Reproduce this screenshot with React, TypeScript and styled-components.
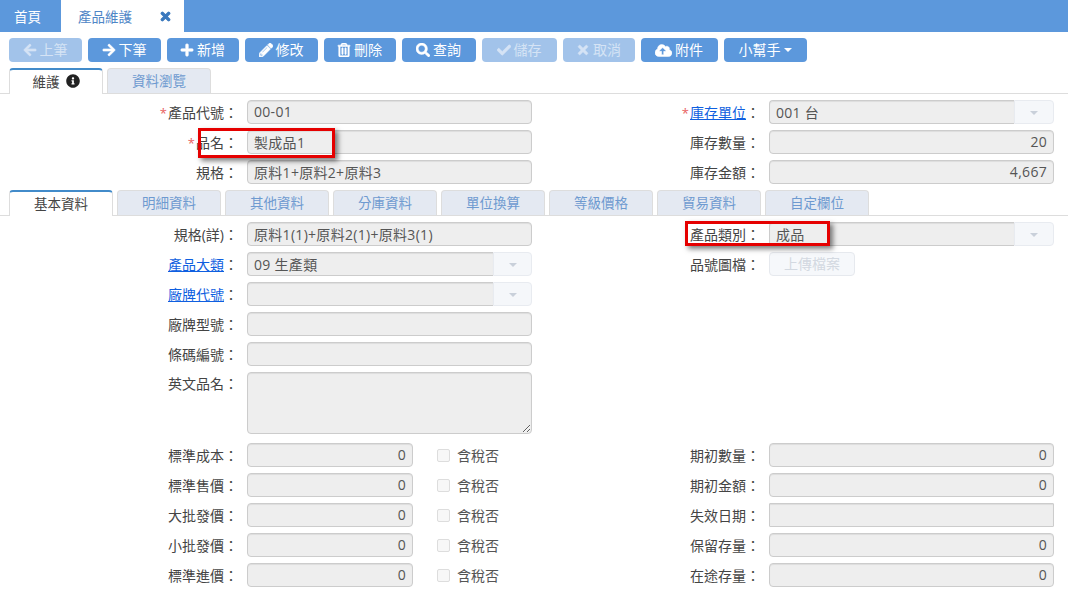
import React from 'react';
import styled, { createGlobalStyle } from 'styled-components';
import {
  FaArrowLeft,
  FaArrowRight,
  FaPlus,
  FaPencilAlt,
  FaRegTrashAlt,
  FaSearch,
  FaCheck,
  FaTimes,
  FaCloudUploadAlt,
  FaInfoCircle,
} from 'react-icons/fa';

const GlobalStyle = createGlobalStyle`
  html, body {
    margin: 0;
    padding: 0;
    background: #fff;
    overflow: hidden;
  }
  body {
    font-family: "Open Sans", "Noto Sans CJK TC", sans-serif;
    font-size: 14px;
    color: #444;
  }
`;

const Page = styled.div`
  position: relative;
  width: 1068px;
  height: 593px;
  overflow: hidden;
`;

const TopBar = styled.div`
  display: flex;
  height: 32px;
  background: #5c98dc;
`;

const TopTab = styled.div<{ $active?: boolean }>`
  display: flex;
  align-items: center;
  padding-left: ${(p) => (p.$active ? '17px' : '14px')};
  width: ${(p) => (p.$active ? '123px' : '61px')};
  box-sizing: border-box;
  background: ${(p) => (p.$active ? '#fff' : 'transparent')};
  color: ${(p) => (p.$active ? '#4f86c6' : '#fff')};
  font-size: 13.5px;
`;

const CloseIcon = styled(FaTimes)`
  margin-left: 27px;
  font-size: 13px;
  color: #3a78bd;
  stroke: currentColor;
  stroke-width: 40;
`;

const Toolbar = styled.div`
  display: flex;
  gap: 6px;
  padding: 6px 9px;
`;

const ToolButton = styled.button<{ $width: number; $off?: boolean }>`
  display: flex;
  align-items: center;
  justify-content: center;
  gap: 3px;
  width: ${(p) => p.$width}px;
  height: 24px;
  padding: 0 1px 2px 0;
  border: 0;
  border-radius: 4px;
  background: ${(p) => (p.$off ? '#a2c3ea' : '#5c98dc')};
  color: ${(p) => (p.$off ? '#d5e3f5' : '#fff')};
  font: inherit;
  svg {
    font-size: 14px;
    margin-top: 2px;
    stroke: currentColor;
    stroke-width: 20;
  }
`;

const CloudIcon = styled(FaCloudUploadAlt)`
  && {
    font-size: 17px;
  }
`;

const Caret = styled.span<{ $color?: string }>`
  display: inline-block;
  width: 0;
  height: 0;
  margin-top: 2px;
  border-left: 4px solid transparent;
  border-right: 4px solid transparent;
  border-top: 4px solid ${(p) => p.$color ?? '#fff'};
`;

const TabStrip = styled.div`
  display: flex;
  gap: 4px;
  box-sizing: border-box;
  padding-left: 9px;
  height: 26px;
  border-bottom: 1px solid #ddd;
`;

const Tab = styled.div<{ $active?: boolean; $width: number }>`
  display: flex;
  align-items: center;
  justify-content: center;
  gap: 6px;
  box-sizing: border-box;
  width: ${(p) => p.$width}px;
  height: ${(p) => (p.$active ? '26px' : '25px')};
  padding-bottom: 3px;
  border: 1px solid #ddd;
  border-top: ${(p) => (p.$active ? '2px solid #428bca' : '1px solid #ddd')};
  border-bottom: 0;
  border-radius: 4px 4px 0 0;
  background: ${(p) => (p.$active ? '#fff' : '#e4e9f2')};
  color: ${(p) => (p.$active ? '#444' : '#6e9ad0')};
  font-size: 13.5px;
  svg {
    font-size: 14px;
    color: #222;
  }
`;

const Section = styled.div`
  display: flex;
  flex-direction: column;
  gap: 6px;
  padding: 6px 0;
`;

const Row = styled.div`
  display: flex;
  align-items: flex-start;
`;

const Field = styled.div`
  display: flex;
  align-items: center;
  height: 24px;
`;

const LeftField = styled(Field)`
  width: 532px;
`;

const Label = styled.label<{ $width: number }>`
  width: ${(p) => p.$width}px;
  margin-right: 9px;
  padding-bottom: 1px;
  text-align: right;
  white-space: nowrap;
  color: #444;
`;

const Star = styled.span`
  margin-right: 1px;
  font-size: 13px;
  color: #e8605f;
`;

const LabelLink = styled.a`
  color: #0f5fe0;
  text-decoration: underline;
`;

const inputLook = `
  box-sizing: border-box;
  height: 24px;
  padding: 0 6px 1px;
  border: 1px solid #ccc;
  border-radius: 4px;
  background: #eee;
  color: #555;
  font: inherit;
  letter-spacing: 0.3px;
  outline: none;
  box-shadow: inset 0 1px 1px rgba(0, 0, 0, 0.075);
`;

const Input = styled.input<{ $width?: number; $right?: boolean }>`
  ${inputLook}
  width: ${(p) => p.$width ?? 285}px;
  text-align: ${(p) => (p.$right ? 'right' : 'left')};
`;

const DateInput = styled(Input)`
  border-radius: 1px;
`;

const TextArea = styled.textarea`
  ${inputLook}
  display: block;
  width: 285px;
  height: 62px;
  resize: both;
`;

const TextAreaField = styled.div`
  display: flex;
  align-items: flex-start;
  margin-bottom: 3px;
  line-height: 24px;
`;

const SelectBox = styled.div<{ $width: number }>`
  display: flex;
  width: 285px;
  ${Input} {
    width: ${(p) => p.$width}px;
    border-radius: 4px 0 0 4px;
    border-right: 0;
  }
`;

const SelectButton = styled.div`
  flex: 1;
  display: flex;
  align-items: center;
  justify-content: center;
  height: 24px;
  box-sizing: border-box;
  border: 1px solid #e8ebf0;
  border-radius: 0 4px 4px 0;
  background: #f5f7fa;
`;

const UploadButton = styled.button`
  box-sizing: border-box;
  width: 86px;
  height: 24px;
  padding: 0 0 2px;
  border: 1px solid #e6e9ee;
  border-radius: 4px;
  background: #f6f8fb;
  color: #d3d9e1;
  font: inherit;
`;

const CheckLabel = styled.span`
  display: flex;
  align-items: center;
  gap: 7px;
  margin-left: 24px;
  padding-bottom: 1px;
  color: #555;
`;

const CheckBox = styled.input`
  appearance: none;
  box-sizing: border-box;
  width: 13px;
  height: 13px;
  margin: 2px 0 0;
  border: 1px solid #ddd;
  border-radius: 2px;
  background: #f7f7f7;
`;

// the red rectangles are annotations drawn on top of the screenshot
const Marker = styled.div<{ $x: number; $y: number; $w: number; $h: number }>`
  position: absolute;
  left: ${(p) => p.$x}px;
  top: ${(p) => p.$y}px;
  width: ${(p) => p.$w}px;
  height: ${(p) => p.$h}px;
  box-sizing: border-box;
  border: 3px solid #e50000;
  box-shadow: 3px 3px 5px rgba(0, 0, 0, 0.5);
  pointer-events: none;
`;

const LEFT_LABEL = 238;
const RIGHT_LABEL = 228;

function TextField({ value, right }: { value: string; right?: boolean }) {
  return <Input readOnly value={value} $right={right} />;
}

function Select({ value, inner }: { value: string; inner: number }) {
  return (
    <SelectBox $width={inner}>
      <Input readOnly value={value} />
      <SelectButton>
        <Caret $color="#c9d0da" />
      </SelectButton>
    </SelectBox>
  );
}

function PriceRow({
  name,
  rightName,
  rightValue,
  date,
}: {
  name: string;
  rightName: string;
  rightValue?: string;
  date?: boolean;
}) {
  return (
    <Row>
      <LeftField>
        <Label $width={LEFT_LABEL}>{name}：</Label>
        <Input readOnly value="0" $width={166} $right />
        <CheckLabel>
          <CheckBox type="checkbox" disabled />
          含稅否
        </CheckLabel>
      </LeftField>
      <Field>
        <Label $width={RIGHT_LABEL}>{rightName}：</Label>
        {date ? <DateInput readOnly value="" /> : <TextField value={rightValue ?? ''} right />}
      </Field>
    </Row>
  );
}

const detailTabs = ['明細資料', '其他資料', '分庫資料', '單位換算', '等級價格', '貿易資料', '自定欄位'];

export default function App() {
  return (
    <Page>
      <GlobalStyle />
      <TopBar>
        <TopTab>首頁</TopTab>
        <TopTab $active>
          產品維護
          <CloseIcon />
        </TopTab>
      </TopBar>

      <Toolbar>
        <ToolButton $width={73} $off><FaArrowLeft />上筆</ToolButton>
        <ToolButton $width={73}><FaArrowRight />下筆</ToolButton>
        <ToolButton $width={72}><FaPlus />新增</ToolButton>
        <ToolButton $width={73}><FaPencilAlt />修改</ToolButton>
        <ToolButton $width={72}><FaRegTrashAlt />刪除</ToolButton>
        <ToolButton $width={74}><FaSearch />查詢</ToolButton>
        <ToolButton $width={75} $off><FaCheck />儲存</ToolButton>
        <ToolButton $width={72} $off><FaTimes />取消</ToolButton>
        <ToolButton $width={77}><CloudIcon />附件</ToolButton>
        <ToolButton $width={83}>小幫手<Caret /></ToolButton>
      </Toolbar>

      <TabStrip>
        <Tab $active $width={94}>維護<FaInfoCircle /></Tab>
        <Tab $width={104}>資料瀏覽</Tab>
      </TabStrip>

      <Section>
        <Row>
          <LeftField>
            <Label $width={LEFT_LABEL}><Star>*</Star>產品代號：</Label>
            <TextField value="00-01" />
          </LeftField>
          <Field>
            <Label $width={RIGHT_LABEL}><Star>*</Star><LabelLink>庫存單位</LabelLink>：</Label>
            <Select value="001 台" inner={245} />
          </Field>
        </Row>
        <Row>
          <LeftField>
            <Label $width={LEFT_LABEL}><Star>*</Star>品名：</Label>
            <TextField value="製成品1" />
          </LeftField>
          <Field>
            <Label $width={RIGHT_LABEL}>庫存數量：</Label>
            <TextField value="20" right />
          </Field>
        </Row>
        <Row>
          <LeftField>
            <Label $width={LEFT_LABEL}>規格：</Label>
            <TextField value="原料1+原料2+原料3" />
          </LeftField>
          <Field>
            <Label $width={RIGHT_LABEL}>庫存金額：</Label>
            <TextField value="4,667" right />
          </Field>
        </Row>
      </Section>

      <TabStrip>
        <Tab $active $width={104}>基本資料</Tab>
        {detailTabs.map((name) => (
          <Tab key={name} $width={104}>{name}</Tab>
        ))}
      </TabStrip>

      <Section>
        <Row>
          <LeftField>
            <Label $width={LEFT_LABEL}>規格(詳)：</Label>
            <TextField value="原料1(1)+原料2(1)+原料3(1)" />
          </LeftField>
          <Field>
            <Label $width={RIGHT_LABEL}>產品類別：</Label>
            <Select value="成品" inner={245} />
          </Field>
        </Row>
        <Row>
          <LeftField>
            <Label $width={LEFT_LABEL}><LabelLink>產品大類</LabelLink>：</Label>
            <Select value="09 生產類" inner={246} />
          </LeftField>
          <Field>
            <Label $width={RIGHT_LABEL}>品號圖檔：</Label>
            <UploadButton disabled>上傳檔案</UploadButton>
          </Field>
        </Row>
        <Row>
          <LeftField>
            <Label $width={LEFT_LABEL}><LabelLink>廠牌代號</LabelLink>：</Label>
            <Select value="" inner={246} />
          </LeftField>
        </Row>
        <Row>
          <LeftField>
            <Label $width={LEFT_LABEL}>廠牌型號：</Label>
            <TextField value="" />
          </LeftField>
        </Row>
        <Row>
          <LeftField>
            <Label $width={LEFT_LABEL}>條碼編號：</Label>
            <TextField value="" />
          </LeftField>
        </Row>
        <Row>
          <TextAreaField>
            <Label $width={LEFT_LABEL}>英文品名：</Label>
            <TextArea readOnly />
          </TextAreaField>
        </Row>
        <PriceRow name="標準成本" rightName="期初數量" rightValue="0" />
        <PriceRow name="標準售價" rightName="期初金額" rightValue="0" />
        <PriceRow name="大批發價" rightName="失效日期" date />
        <PriceRow name="小批發價" rightName="保留存量" rightValue="0" />
        <PriceRow name="標準進價" rightName="在途存量" rightValue="0" />
      </Section>

      <Marker $x={198} $y={128} $w={137} $h={30} />
      <Marker $x={685} $y={221} $w={145} $h={25} />
    </Page>
  );
}
